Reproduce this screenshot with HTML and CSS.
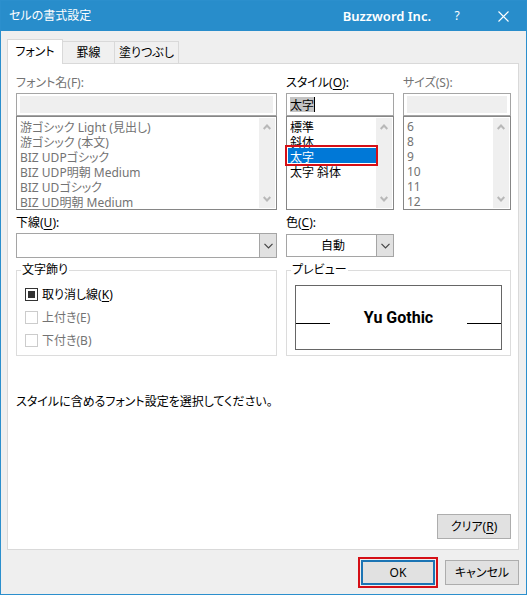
FILE: index.html
```html
<!DOCTYPE html>
<html lang="ja">
<head>
<meta charset="utf-8">
<title>セルの書式設定</title>
<link rel="stylesheet" href="styles.css">
</head>
<body>
<main class="dialog">
  <header class="titlebar">
    <h1 class="title">セルの書式設定</h1>
    <span class="brand">Buzzword Inc.</span>
    <button class="title-button" type="button">?</button>
    <button class="title-button" type="button" aria-label="閉じる">
      <svg width="11" height="11" viewBox="0 0 11 11"><path d="M.5.5l10 10M10.500.5l-10 10" fill="none" stroke="currentColor" stroke-width="1.1"/></svg>
    </button>
  </header>

  <nav class="tabs" role="tablist">
    <button class="tab tab-active" type="button" role="tab" aria-selected="true">フォント</button>
    <button class="tab tab-border" type="button" role="tab">罫線</button>
    <button class="tab tab-fill" type="button" role="tab">塗りつぶし</button>
  </nav>

  <section class="panel" role="tabpanel">
    <div class="columns">
      <div class="field field-disabled">
        <label class="label" for="font-name">フォント名(F):</label>
        <input class="text" id="font-name" type="text" disabled>
        <div class="list">
          <select class="options" size="6" disabled aria-label="フォント名の一覧">
            <option>游ゴシック Light (見出し)</option>
            <option>游ゴシック (本文)</option>
            <option>BIZ UDPゴシック</option>
            <option>BIZ UDP明朝 Medium</option>
            <option>BIZ UDゴシック</option>
            <option>BIZ UD明朝 Medium</option>
          </select>
          <span class="scrollbar">
            <svg width="8" height="6" viewBox="0 0 8 6"><path d="M0.700 5L4 1.500L7.300 5"/></svg>
            <svg width="8" height="6" viewBox="0 0 8 6"><path d="M0.700 1L4 4.500L7.300 1"/></svg>
          </span>
        </div>
      </div>

      <div class="field">
        <label class="label" for="style">スタイル(<u>O</u>):</label>
        <input class="text text-selected" id="style" type="text" value="太字">
        <div class="list">
          <select class="options" size="6" aria-label="スタイルの一覧">
            <option>標準</option>
            <option>斜体</option>
            <option selected>太字</option>
            <option>太字 斜体</option>
          </select>
          <span class="scrollbar">
            <svg width="8" height="6" viewBox="0 0 8 6"><path d="M0.700 5L4 1.500L7.300 5"/></svg>
            <svg width="8" height="6" viewBox="0 0 8 6"><path d="M0.700 1L4 4.500L7.300 1"/></svg>
          </span>
          <span class="callout"></span>
        </div>
      </div>

      <div class="field field-disabled">
        <label class="label" for="size">サイズ(S):</label>
        <input class="text" id="size" type="text" disabled>
        <div class="list">
          <select class="options" size="6" disabled aria-label="サイズの一覧">
            <option>6</option>
            <option>8</option>
            <option>9</option>
            <option>10</option>
            <option>11</option>
            <option>12</option>
          </select>
          <span class="scrollbar">
            <svg width="8" height="6" viewBox="0 0 8 6"><path d="M0.700 5L4 1.500L7.300 5"/></svg>
            <svg width="8" height="6" viewBox="0 0 8 6"><path d="M0.700 1L4 4.500L7.300 1"/></svg>
          </span>
        </div>
      </div>

      <div class="field">
        <label class="label" for="underline">下線(<u>U</u>):</label>
        <div class="combo">
          <select class="combo-select" id="underline"><option></option></select>
          <span class="combo-arrow"><svg width="9" height="6" viewBox="0 0 9 6"><path d="M.5 .8L4.500 4.800L8.500 .8"/></svg></span>
        </div>
      </div>

      <div class="field">
        <label class="label" for="color">色(<u>C</u>):</label>
        <div class="combo combo-small">
          <select class="combo-select combo-center" id="color"><option>自動</option></select>
          <span class="combo-arrow"><svg width="9" height="6" viewBox="0 0 9 6"><path d="M.5 .8L4.500 4.800L8.500 .8"/></svg></span>
        </div>
      </div>

      <fieldset class="group group-effects">
        <legend class="legend">文字飾り</legend>
        <label class="check"><input class="box" type="checkbox" checked><span>取り消し線(<u>K</u>)</span></label>
        <label class="check check-disabled"><input class="box" type="checkbox" disabled><span>上付き(E)</span></label>
        <label class="check check-disabled"><input class="box" type="checkbox" disabled><span>下付き(B)</span></label>
      </fieldset>

      <fieldset class="group group-preview">
        <legend class="legend">プレビュー</legend>
        <div class="preview">
          <span class="rule"></span>
          <span class="sample">Yu Gothic</span>
          <span class="rule"></span>
        </div>
      </fieldset>
    </div>

    <p class="message">スタイルに含めるフォント設定を選択してください。</p>
    <button class="button button-clear" type="button">クリア(<u>R</u>)</button>
  </section>

  <footer class="footer">
    <button class="button button-default" type="button">OK</button>
    <button class="button" type="button">キャンセル</button>
  </footer>
</main>
</body>
</html>
```
FILE: styles.css
```css
* {
  box-sizing: border-box;
}

body {
  margin: 0;
  font-family: "Noto Sans", "Noto Sans CJK JP", sans-serif;
  font-size: 12px;
  line-height: 20px;
  color: #000;
  font-feature-settings: "palt";
}

button,
input,
select {
  margin: 0;
  font: inherit;
  font-feature-settings: inherit;
  color: inherit;
}

u {
  text-underline-offset: 2px;
}

.dialog {
  display: flex;
  flex-direction: column;
  min-height: 100vh;
  border: 1px solid #2b8fcd;
  background: #efefef;
}

/* Title bar */
.titlebar {
  display: flex;
  align-items: center;
  height: 30px;
  padding-left: 8px;
  background: #288dcb;
  color: #fff;
}

.title {
  flex: 1;
  margin: 0;
  font-size: 12px;
  font-weight: 400;
}

.brand {
  font-size: 13px;
  font-weight: 600;
  margin-right: 3px;
}

.title-button {
  display: grid;
  place-items: center;
  width: 46px;
  height: 30px;
  padding: 0;
  border: 0;
  background: none;
}

/* Tabs */
.tabs {
  display: flex;
  align-items: flex-end;
  height: 32px;
  padding: 0 6px;
}

.tab {
  height: 22px;
  padding: 0;
  border: 1px solid #d9d9d9;
  border-width: 1px 1px 0 0;
  background: #f0f0f0;
}

.tab-active {
  position: relative;
  width: 56px;
  height: 25px;
  margin-bottom: -1px;
  border-left-width: 1px;
  background: #fff;
}

.tab-border {
  width: 52px;
}

.tab-fill {
  width: 64px;
}

/* Panel */
.panel {
  flex: 1;
  display: flex;
  flex-direction: column;
  margin: 0 7px 0 6px;
  padding: 9px 7px 10px 8px;
  border: 1px solid #d9d9d9;
  background: #fff;
}

.columns {
  display: grid;
  grid-template-columns: 1fr 108px 108px;
  column-gap: 9px;
  row-gap: 3px;
}

.field {
  display: flex;
  flex-direction: column;
  min-width: 0;
}

.field-disabled,
.check-disabled {
  color: #737373;
}

.label {
  height: 20px;
}

.text {
  width: 100%;
  height: 23px;
  padding: 2px 3px;
  border: 1px solid #a5a5a5;
  border-radius: 0;
  outline: 0;
  background: #fff;
}

.text:disabled {
  background: #efefef content-box;
}

/* Selected text with the caret at its end */
.text-selected {
  background:
    linear-gradient(#000, #000) 27px 3px / 1px 15px no-repeat,
    linear-gradient(#c3c3c3, #c3c3c3) 3px 3px / 24px 15px no-repeat,
    #fff;
}

.list {
  position: relative;
  display: flex;
  height: 94px;
  border: 1px solid #868686;
  padding: 1px;
}

.options {
  flex: 1;
  min-width: 0;
  height: 90px;
  padding: 0;
  border: 0;
  border-radius: 0;
  outline: 0;
  overflow: hidden;
  background: #fff;
}

.options:disabled {
  opacity: 1;
}

.options option {
  height: 15px;
  min-height: 15px;
  padding: 0 2px;
  line-height: 13px;
}

.options:disabled option {
  color: #737373;
}

.options option:checked {
  background: linear-gradient(#0078d7, #0078d7);
  color: #fff;
}

.scrollbar {
  display: flex;
  flex-direction: column;
  justify-content: space-between;
  align-items: center;
  width: 16px;
  padding: 6px 0;
  background: #efefef;
}

.scrollbar path {
  fill: none;
  stroke: #b8b8b8;
  stroke-width: 2;
}

.callout {
  position: absolute;
  top: 28px;
  left: -2px;
  right: 15px;
  height: 21px;
  border: 2px solid #d50f16;
  pointer-events: none;
}

/* Drop-down lists */
.combo {
  position: relative;
  height: 25px;
}

.combo-small {
  height: 23px;
  margin: 1px 0;
}

.combo-select {
  appearance: none;
  display: block;
  width: 100%;
  height: 100%;
  padding: 0 18px 0 4px;
  border: 1px solid #a5a5a5;
  border-radius: 0;
  background: #fff;
}

.combo-center {
  text-align: center;
  text-align-last: center;
}

.combo-arrow {
  position: absolute;
  top: 0;
  right: 0;
  bottom: 0;
  display: grid;
  place-items: center;
  width: 18px;
  border: 1px solid #a5a5a5;
  background: #e1e1e1;
  pointer-events: none;
}

.combo-arrow path {
  fill: none;
  stroke: #444;
  stroke-width: 1.2;
}

/* Group boxes */
.group {
  min-width: 0;
  margin: 1px 0 0;
  border: 1px solid #dcdcdc;
}

.group-effects {
  padding: 5px 8px 3px;
  grid-column: 1;
}

.group-preview {
  padding: 7px 8px 5px;
  grid-column: 2 / -1;
}

.legend {
  height: 16px;
  margin-left: -4px;
  padding: 0 1px;
  line-height: 16px;
}

.check {
  display: flex;
  align-items: center;
  gap: 4px;
  height: 23px;
}

.box {
  appearance: none;
  display: grid;
  place-items: center;
  width: 13px;
  height: 13px;
  border: 1px solid #333;
  background: #fff;
}

.box:checked::before {
  content: "";
  width: 7px;
  height: 7px;
  background: #333;
}

.box:disabled {
  border-color: #ccc;
}

.preview {
  display: flex;
  align-items: center;
  justify-content: space-between;
  height: 65px;
  border: 1px solid #666;
}

.rule {
  width: 34px;
  height: 1px;
  margin-top: 11px;
  background: #000;
}

.sample {
  font-family: Roboto, sans-serif;
  font-size: 16px;
  font-weight: 700;
}

.message {
  margin: 36px 0 0;
}

/* Buttons */
.button {
  width: 74px;
  height: 25px;
  padding: 0;
  border: 1px solid #adadad;
  background: #e1e1e1;
}

.button-clear {
  align-self: flex-end;
  margin-top: auto;
}

.button-default {
  border: 2px solid #1b74b4;
  outline: 2px solid #d50f16;
  outline-offset: 1px;
}

.footer {
  display: flex;
  justify-content: flex-end;
  gap: 10px;
  padding: 10px 7px 9px;
}
```
